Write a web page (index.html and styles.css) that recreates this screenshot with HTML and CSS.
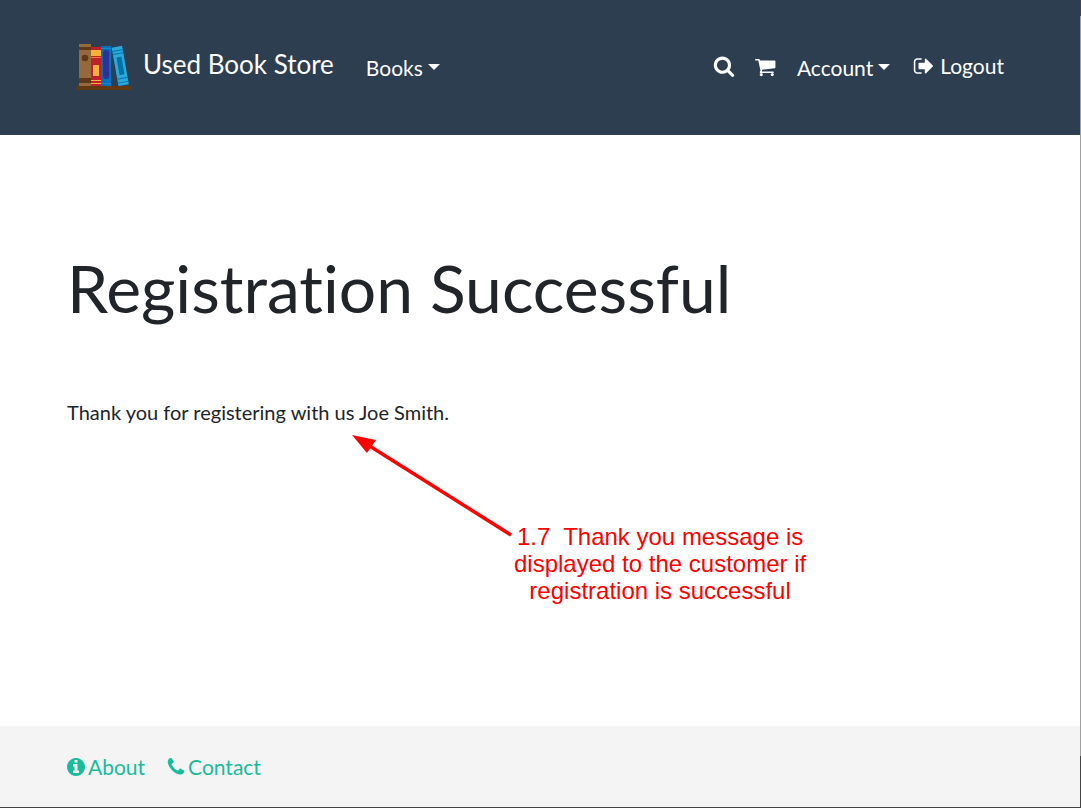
FILE: index.html
```html
<!DOCTYPE html>
<html lang="en">
<head>
<meta charset="utf-8">
<meta name="viewport" content="width=device-width, initial-scale=1">
<title>Used Book Store</title>
<link rel="stylesheet" href="styles.css">
</head>
<body>
<div class="window">
  <header class="navbar">
    <a class="brand" href="#">
      <svg class="logo" viewBox="0 1 56 56" aria-hidden="true">
        <rect x="2" y="9" width="12" height="42" fill="#94693b"/>
        <path d="M2 12h12v3H2zM2 43h12v5H2z" fill="#603813"/>
        <circle cx="8" cy="23" r="3.300" fill="#603813"/>
        <rect x="14" y="12" width="10" height="39" fill="#c1202b"/>
        <path d="M14 15h10v6H14zM16 30h6v11h-6zM14 45h10v1H14zM14 48h10v1H14z" fill="#fbb03b"/>
        <path d="M14 22h10v1H14z" fill="#ef7d35"/>
        <rect x="24" y="11" width="10" height="40" fill="#0071bc"/>
        <path d="M24 13h10v1H24zM24 48h10v1H24z" fill="#1388d0"/>
        <rect x="26" y="15" width="6" height="29" rx="3" fill="#2e3192"/>
        <g transform="rotate(-10 43 31)">
          <rect x="38" y="11.500" width="10.500" height="39" fill="#29abda"/>
          <path d="M38 15h10.500v1H38zM38 18h10.500v1H38zM38 43h10.500v1H38zM38 47h10.500v1H38z" fill="#0874ad"/>
          <rect x="41" y="22" width="5" height="18" fill="#0071a6"/>
        </g>
        <rect x="0" y="51" width="55" height="4" fill="#603813"/>
      </svg>
      <span>Used Book Store</span>
    </a>
    <nav class="nav-main">
      <button class="nav-item dropdown" type="button">Books</button>
    </nav>
    <nav class="nav-user">
      <a class="nav-item" href="#" aria-label="Search">
        <svg class="icon" viewBox="0 0 1792 1792"><path d="M1216 832q0-185-131.500-316.500t-316.500-131.500-316.500 131.500-131.500 316.500 131.500 316.500 316.500 131.500 316.500-131.500 131.500-316.500zm512 832q0 52-38 90t-90 38q-54 0-90-38l-343-342q-179 124-399 124-143 0-273.500-55.500t-225-150-150-225-55.500-273.500 55.500-273.500 150-225 225-150 273.500-55.500 273.500 55.500 225 150 150 225 55.500 273.500q0 220-124 399l343 343q37 37 37 90z"/></svg>
      </a>
      <a class="nav-item" href="#" aria-label="Cart">
        <svg class="icon" viewBox="64 -64 1792 1792"><path d="M704 1536q0 52-38 90t-90 38-90-38-38-90 38-90 90-38 90 38 38 90zm896 0q0 52-38 90t-90 38-90-38-38-90 38-90 90-38 90 38 38 90zm128-1088v512q0 24-16.500 42.500t-40.500 21.500l-1044 122q13 60 13 70 0 16-24 64h920q26 0 45 19t19 45-19 45-45 19h-1024q-26 0-45-19t-19-45q0-11 8-31.500t16-36 21.500-40 15.500-29.500l-177-823h-204q-26 0-45-19t-19-45 19-45 45-19h256q16 0 28.500 6.500t19.500 15.500 13 24.500 8 26 5.500 29.500 4.500 26h1201q26 0 45 19t19 45z"/></svg>
      </a>
      <button class="nav-item dropdown" type="button">Account</button>
      <a class="nav-item logout" href="#">
        <svg class="icon" viewBox="0 0 1792 1792" aria-hidden="true"><path d="M704 1440q0 4 1 20t.5 26.500-3 23.500-10 19.500-20.500 6.500h-320q-119 0-203.500-84.500t-84.500-203.500v-704q0-119 84.500-203.500t203.500-84.500h320q13 0 22.500 9.500t9.500 22.500q0 4 1 20t.5 26.500-3 23.500-10 19.500-20.500 6.500h-320q-66 0-113 47t-47 113v704q0 66 47 113t113 47h312l11.500 1 11.500 3 8 5.500 7 9 2 13.500zm928-544q0 26-19 45l-544 544q-19 19-45 19t-45-19-19-45v-288h-448q-26 0-45-19t-19-45v-384q0-26 19-45t45-19h448v-288q0-26 19-45t45-19 45 19l544 544q19 19 19 45z"/></svg>
        <span>Logout</span>
      </a>
    </nav>
  </header>

  <main class="content">
    <h1 class="title">Registration Successful</h1>
    <p class="message">Thank you for registering with us Joe Smith.</p>
    <div class="annotation">
      <svg class="arrow" viewBox="0 0 162 104" aria-hidden="true">
        <path d="M16 11L159 101" stroke="#f00" stroke-width="3.500" fill="none"/>
        <path d="M0 1L24 6L15 19Z" fill="#f00"/>
      </svg>
      <p class="note">1.7&nbsp; Thank you message is<br>displayed to the customer if<br>registration is successful</p>
    </div>
  </main>

  <footer class="footer">
    <a class="footer-link" href="#">
      <svg class="icon" viewBox="128 0 1536 1792" aria-hidden="true"><path d="M1152 1376v-160q0-14-9-23t-23-9h-96v-512q0-14-9-23t-23-9h-320q-14 0-23 9t-9 23v160q0 14 9 23t23 9h96v320h-96q-14 0-23 9t-9 23v160q0 14 9 23t23 9h448q14 0 23-9t9-23zm-128-896v-160q0-14-9-23t-23-9h-192q-14 0-23 9t-9 23v160q0 14 9 23t23 9h192q14 0 23-9t9-23zm640 416q0 209-103 385.500t-279.500 279.500-385.500 103-385.500-103-279.500-279.500-103-385.500 103-385.500 279.500-279.500 385.500-103 385.500 103 279.500 279.500 103 385.500z"/></svg>
      <span>About</span>
    </a>
    <a class="footer-link" href="#">
      <svg class="icon" viewBox="128 0 1536 1792" aria-hidden="true"><path d="M1600 1240q0 27-10 70.500t-21 68.500q-21 50-122 106-94 51-186 51-27 0-53-3.500t-57.500-12.500-47-14.500-55.500-20.500-49-18q-98-35-175-83-127-79-264-216t-216-264q-48-77-83-175-3-9-18-49t-20.500-55.500-14.500-47-12.500-57.500-3.500-53q0-92 51-186 56-101 106-122 25-11 68.500-21t70.500-10q14 0 21 3 18 6 53 76 11 19 30 54t35 63.500 31 53.500q3 4 17.500 25t21.500 35.500 7 28.500q0 20-28.500 50t-62 55-62 53-28.500 46q0 9 5 22.500t8.500 20.500 14 24 11.500 19q76 137 174 235t235 174q2 1 19 11.500t24 14 20.500 8.500 22.500 5q18 0 46-28.500t53-62 55-62 50-28.500q14 0 28.500 7t35.500 21.500 25 17.500q25 15 53.500 31t63.500 35 54 30q70 35 76 53 3 7 3 21z"/></svg>
      <span>Contact</span>
    </a>
  </footer>
</div>
</body>
</html>
```
FILE: styles.css
```css
* {
  box-sizing: border-box;
}

body {
  margin: 0;
  background: #fff;
  color: #212529;
  font-family: Lato, sans-serif;
  font-size: 21px;
  font-variant-ligatures: none;
  line-height: 32px;
}

.window {
  display: flex;
  flex-direction: column;
  min-height: 100vh;
  padding: 0 1px 1px 0;
  background:
    linear-gradient(#444, #444) bottom / 100% 1px no-repeat,
    linear-gradient(#444 16px, #a0a0a0 16px calc(100% - 52px), #444 calc(100% - 52px)) right / 1px 100% no-repeat;
}

.navbar {
  display: flex;
  align-items: center;
  padding: 36px 76px 39px 77px;
  background: #2c3e50;
  color: #fff;
}

.brand {
  display: flex;
  align-items: center;
  gap: 10px;
  padding-bottom: 4px;
  color: #fff;
  font-size: 26px;
  text-decoration: none;
}

.logo {
  width: 56px;
  height: 56px;
}

.nav-main {
  margin-left: 32px;
}

.nav-user {
  display: flex;
  align-items: center;
  gap: 20px;
  margin-left: auto;
}

.nav-item {
  display: flex;
  align-items: center;
  gap: 5px;
  padding: 0;
  border: 0;
  background: none;
  color: #fff;
  font: inherit;
  text-decoration: none;
}

.logout {
  margin-left: 3px;
}

.dropdown {
  padding-top: 4px;
}

.dropdown::after {
  content: "";
  margin-bottom: 3px;
  border: 6px solid transparent;
  border-top-color: #fff;
  border-bottom: 0;
}

.icon {
  flex: none;
  width: 22px;
  height: 22px;
  fill: currentColor;
}

.content {
  flex: 1;
  padding: 112px 67px 0;
}

.title {
  margin: 0;
  font-size: 66px;
  font-weight: 400;
  line-height: 82px;
}

.message {
  margin: 67px 0 0;
  font-size: 20px;
}

.annotation {
  display: flex;
  align-items: flex-end;
  margin: 6px 0 0 285px;
}

.arrow {
  flex: none;
  width: 162px;
  height: 104px;
  margin-bottom: 66px;
}

.note {
  margin: 0;
  color: #f00;
  font-family: "Liberation Sans", Arial, sans-serif;
  font-size: 24px;
  line-height: 27px;
  text-align: center;
}

.footer {
  display: flex;
  gap: 22px;
  padding: 25px 67px 24px;
  background: #f4f4f4;
}

.footer-link {
  display: flex;
  align-items: center;
  gap: 3px;
  color: #18bc9c;
  text-decoration: none;
}

.footer-link .icon {
  width: 18px;
}
```
